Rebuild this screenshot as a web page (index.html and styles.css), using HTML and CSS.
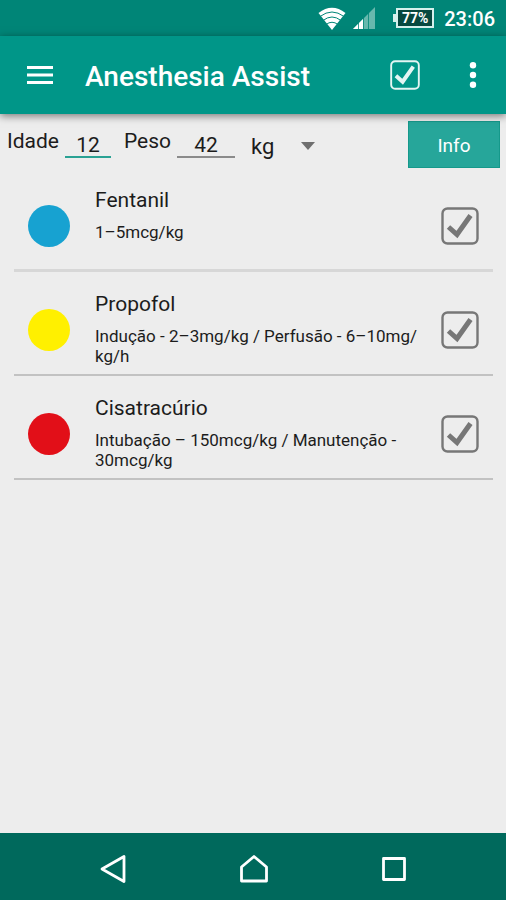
FILE: index.html
```html
<!DOCTYPE html>
<html lang="pt">
<head>
<meta charset="utf-8">
<title>Anesthesia Assist</title>
<link rel="stylesheet" href="styles.css">
</head>
<body>
<svg width="0" height="0" class="defs">
  <symbol id="check" viewBox="0 0 38 38">
    <rect x="1.5" y="1.5" width="35" height="35" rx="5" fill="none" stroke="currentColor" stroke-width="2.400"/>
    <path d="M7.500 20 L16 27.500 L29.500 8.500" fill="none" stroke="currentColor" stroke-width="5"/>
  </symbol>
</svg>
<div class="screen">
  <div class="status">
    <svg class="wifi" width="28" height="24" viewBox="0 0 28 24">
      <path d="M0.500 6 Q14 -4.500 27.500 6 L14 23 Z" fill="#fff"/>
      <path d="M2 9.500 Q14 0.500 26 9.500 M5 13.500 Q14 6.500 23 13.500 M8 17.500 Q14 13 20 17.500" fill="none" stroke="#008577" stroke-width="1"/>
    </svg>
    <svg class="signal" width="22" height="22" viewBox="0 0 22 22">
      <path d="M0 22 L22 0 V22 Z" fill="#68b8ad"/>
      <path d="M0 22 L10 12 V22 Z" fill="#fff"/>
      <path d="M5.500 15 V22 M10.500 10 V22 M15.500 5 V22" stroke="#008577" stroke-width="0.800"/>
    </svg>
    <div class="battery">77%</div>
    <div class="clock">23:06</div>
  </div>
  <header class="appbar">
    <svg class="menu" width="26" height="20" viewBox="0 0 26 20"><path d="M0 2.500h26M0 10h26M0 17.500h26" stroke="#fff" stroke-width="3"/></svg>
    <h1>Anesthesia Assist</h1>
    <svg class="barcheck" width="30" height="30"><use href="#check"/></svg>
    <svg class="more" width="8" height="28" viewBox="0 0 8 28"><g fill="#fff"><circle cx="4" cy="4.300" r="3.200"/><circle cx="4" cy="14" r="3.200"/><circle cx="4" cy="23.700" r="3.200"/></g></svg>
  </header>
  <main>
    <div class="form">
      <span class="label">Idade</span>
      <span class="field age">12</span>
      <span class="label weight-label">Peso</span>
      <span class="field weight">42</span>
      <span class="unit">kg</span>
      <svg class="arrow" width="14" height="8" viewBox="0 0 14 8"><path d="M0 0H14L7 8Z" fill="#6f6f6f"/></svg>
      <button class="info">Info</button>
    </div>
    <ul class="drugs">
      <li class="faint">
        <span class="dot blue"></span>
        <div class="text"><h2>Fentanil</h2><p>1–5mcg/kg</p></div>
        <svg class="tick" width="38" height="38"><use href="#check"/></svg>
      </li>
      <li>
        <span class="dot yellow"></span>
        <div class="text"><h2>Propofol</h2><p>Indução - 2–3mg/kg / Perfusão - 6–10mg/<br>kg/h</p></div>
        <svg class="tick" width="38" height="38"><use href="#check"/></svg>
      </li>
      <li>
        <span class="dot red"></span>
        <div class="text"><h2>Cisatracúrio</h2><p>Intubação – 150mcg/kg / Manutenção -<br>30mcg/kg</p></div>
        <svg class="tick" width="38" height="38"><use href="#check"/></svg>
      </li>
    </ul>
  </main>
  <nav class="navbar">
    <svg width="28" height="30" viewBox="0 0 28 30"><path d="M3 15 L25 2.500 V27.500 Z" fill="none" stroke="#fff" stroke-width="2.800" stroke-linejoin="round"/></svg>
    <svg width="30" height="30" viewBox="0 0 30 30"><path d="M2.500 27 V13 L15 2.500 L27.500 13 V27 Z" fill="none" stroke="#fff" stroke-width="2.800" stroke-linejoin="round"/></svg>
    <svg width="26" height="26" viewBox="0 0 26 26"><rect x="2.500" y="2.500" width="21" height="21" fill="none" stroke="#fff" stroke-width="2.800" stroke-linejoin="round"/></svg>
  </nav>
</div>
</body>
</html>
```
FILE: styles.css
```css
* { box-sizing: border-box; }
body { margin: 0; font-family: Roboto, sans-serif; color: #1c1c1c; }
.defs { position: absolute; }
.screen { width: 506px; height: 900px; display: flex; flex-direction: column; background: #ededed; }
svg { flex: none; }
.status { height: 36px; flex: none; background: #008577; display: flex; align-items: center; justify-content: flex-end; padding-right: 11px; color: #fff; }
.wifi { margin: 2px 7px 0 0; }
.signal { margin: 0 21px 0 0; }
.battery { position: relative; width: 38px; height: 20px; border: 2px solid #d5f0ec; background: #07483f; font-size: 14px; font-weight: 700; line-height: 16px; text-align: center; margin-right: 10px; }
.battery::before { content: ""; position: absolute; left: -5px; top: 4px; width: 3px; height: 8px; background: #d5f0ec; }
.clock { font-size: 20px; font-weight: 500; line-height: 36px; padding-top: 2px; }
.appbar { height: 78px; flex: none; background: #009688; display: flex; align-items: center; padding: 0 29px 0 27px; color: #fff; position: relative; box-shadow: 0 2px 8px rgba(0,0,0,.5); }
.appbar h1 { margin: 3px 0 0 32px; flex: 1; font-size: 28px; font-weight: 500; line-height: 36px; white-space: nowrap; }
.barcheck { margin-right: 49px; color: #e4f5f3; }
main { flex: 1; }
.form { height: 53px; display: flex; align-items: flex-start; padding: 7px 6px 0 7px; font-size: 21px; line-height: 24px; }
.label { margin-top: 8px; width: 58px; }
.field { text-align: center; padding-top: 12px; height: 37px; border-bottom: 2px solid #8b8b8b; }
.age { width: 46px; border-color: #2aa294; }
.weight-label { margin-left: 13px; width: 53px; }
.weight { width: 58px; }
.unit { margin: 14px 0 0 16px; width: 50px; font-size: 22px; }
.arrow { margin-top: 21px; }
.info { margin-left: auto; width: 92px; height: 47px; border: 1px solid #15998b; background: #26a69a; color: #fff; font: 19px/45px Roboto, sans-serif; padding: 1px 0 0; }
.drugs { list-style: none; margin: 0 13px 0 14px; padding: 0; }
.drugs li { height: 105px; margin-bottom: -1px; display: flex; align-items: flex-start; border-bottom: 2px solid #c2c2c2; padding: 0 14px; }
.drugs .faint { border-bottom: 3px solid #d7d7d7; }
.dot { width: 42px; height: 42px; border-radius: 50%; margin-top: 38px; flex: none; }
.blue { background: #17a2d1; }
.yellow { background: #fff000; }
.red { background: #e20f18; }
.text { margin: 19px 0 0 25px; flex: 1; }
h2 { margin: 0; font-size: 21px; font-weight: 400; line-height: 28px; }
p { margin: 8px 0 0; font-size: 17px; line-height: 20px; white-space: nowrap; }
.tick { margin-top: 40px; color: #777; }
.navbar { height: 67px; flex: none; background: #00695c; display: flex; align-items: center; justify-content: space-between; padding: 4px 99px 0 99px; }
```
